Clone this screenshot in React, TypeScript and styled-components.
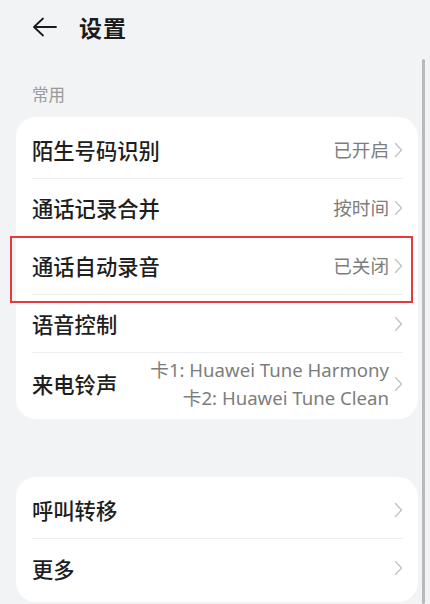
import React from 'react';
import styled, { createGlobalStyle } from 'styled-components';

const GlobalStyle = createGlobalStyle`
  html, body {
    margin: 0;
    padding: 0;
    background: #f1f3f5;
    font-family: Roboto, "Noto Sans CJK SC", sans-serif;
    -webkit-font-smoothing: antialiased;
  }
`;

const SPage = styled.div`
  position: relative;
  width: 430px;
  height: 604px;
  overflow: hidden;
  background: #f1f3f5;
`;
const SHeader = styled.div`
  display: flex;
  align-items: center;
  height: 53px;
  padding-left: 32px;
  gap: 22px;
`;
const STitle = styled.div`
  font-size: 23px;
  font-weight: 700;
  color: #1b1b1b;
  letter-spacing: 1px;
`;
const SSectionLabel = styled.div`
  font-size: 16.5px;
  color: #9a9a9a;
  padding: 31px 0 0 32px;
  height: 33px;
  line-height: 24px;
`;
const SCard = styled.div<{ gapTop?: number }>`
  margin: ${({ gapTop }) => gapTop ?? 0}px 12px 0 16px;
  background: #ffffff;
  border-radius: 20px;
  padding: 4px 0 5px;
`;
const SRow = styled.div`
  position: relative;
  padding: 0 15px 0 16px;
`;
const SRowInner = styled.div<{ last?: boolean; tall?: boolean }>`
  display: flex;
  align-items: center;
  justify-content: space-between;
  min-height: ${({ tall }) => (tall ? 61 : 58)}px;
  border-bottom: ${({ last }) => (last ? 'none' : '1px solid #eeeff1')};
  box-sizing: border-box;
`;
const SLabel = styled.div`
  font-size: 21.3px;
  font-weight: 500;
  color: #1e1e1e;
  white-space: nowrap;
`;
const SRight = styled.div`
  display: flex;
  align-items: center;
  gap: 5px;
`;
const SValue = styled.div`
  font-family: "Noto Sans", "Noto Sans CJK SC", sans-serif;
  font-size: 18.6px;
  color: #7d7d7d;
  text-align: right;
  line-height: 28px;
  white-space: nowrap;
`;
const SHighlight = styled.div`
  position: absolute;
  left: -6px;
  right: 5px;
  top: -1px;
  bottom: -8px;
  border: 2px solid #e8383c;
  pointer-events: none;
`;
const SScrollbar = styled.div`
  position: absolute;
  right: 5px;
  top: 59px;
  bottom: 0;
  width: 3px;
  border-radius: 2px;
  background: #b9b9b9;
`;

const BackArrow = () => (
  <svg width="25" height="20" viewBox="0 0 25 20" fill="none">
    <path
      d="M24 10H2M11 1.5L2 10l9 8.5"
      stroke="#1b1b1b"
      strokeWidth="1.8"
      strokeLinecap="round"
      strokeLinejoin="round"
    />
  </svg>
);

const Chevron = () => (
  <svg width="9" height="16" viewBox="0 0 9 16" fill="none">
    <path
      d="M1.5 1.5L7.5 8l-6 6.5"
      stroke="#c4c4c4"
      strokeWidth="1.4"
      strokeLinecap="round"
      strokeLinejoin="round"
    />
  </svg>
);

type TItem = {
  label: string;
  value?: string[];
  highlight?: boolean;
};

const common: TItem[] = [
  { label: '陌生号码识别', value: ['已开启'] },
  { label: '通话记录合并', value: ['按时间'] },
  { label: '通话自动录音', value: ['已关闭'], highlight: true },
  { label: '语音控制' },
  {
    label: '来电铃声',
    value: ['卡1: Huawei Tune Harmony', '卡2: Huawei Tune Clean'],
  },
];

const others: TItem[] = [{ label: '呼叫转移' }, { label: '更多' }];

const SettingsCard = ({ items, gapTop }: { items: TItem[]; gapTop?: number }) => (
  <SCard gapTop={gapTop}>
    {items.map((item, i) => (
      <SRow key={item.label}>
        <SRowInner last={i === items.length - 1} tall={(item.value?.length ?? 0) > 1}>
          <SLabel>{item.label}</SLabel>
          <SRight>
            {item.value && (
              <SValue>
                {item.value.map((v) => (
                  <div key={v}>{v}</div>
                ))}
              </SValue>
            )}
            <Chevron />
          </SRight>
        </SRowInner>
        {item.highlight && <SHighlight />}
      </SRow>
    ))}
  </SCard>
);

export default function App() {
  return (
    <>
      <GlobalStyle />
      <SPage>
        <SHeader>
          <BackArrow />
          <STitle>设置</STitle>
        </SHeader>
        <SSectionLabel>常用</SSectionLabel>
        <SettingsCard items={common} />
        <SettingsCard items={others} gapTop={58} />
        <SScrollbar />
      </SPage>
    </>
  );
}
